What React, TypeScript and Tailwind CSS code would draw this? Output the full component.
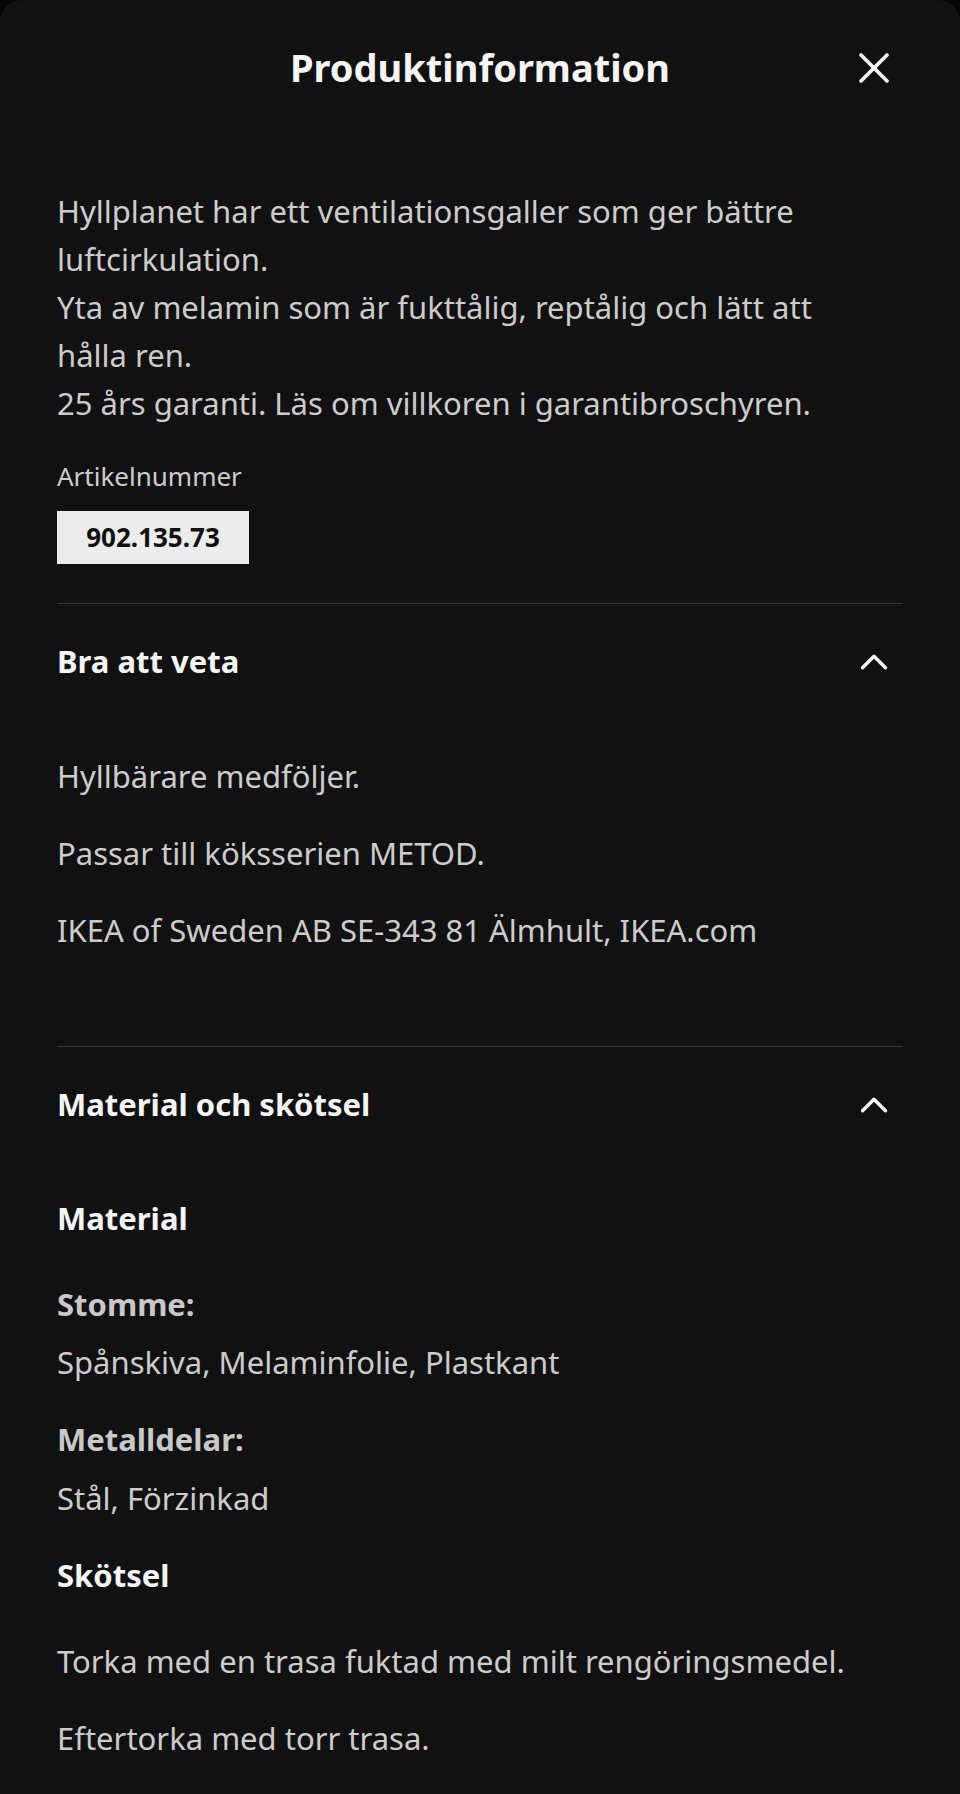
import { ChevronUp, X } from 'lucide-react';

const font = { fontFamily: '"Noto Sans", "Open Sans", sans-serif' };

function SectionHeader({ title }: { title: string }) {
  return (
    <button className="flex h-[115px] w-full items-center justify-between text-left">
      <span className="text-[31px] font-bold text-[#f5f5f5]">{title}</span>
      <ChevronUp size={46} strokeWidth={1.8} className="mr-[6px] text-[#f5f5f5]" />
    </button>
  );
}

export default function App() {
  return (
    <div className="min-h-screen bg-[#050505]" style={font}>
      <div className="min-h-[1794px] rounded-t-[22px] bg-[#111111] px-[57px] pb-10">
        {/* Header */}
        <div className="grid h-[135px] grid-cols-[1fr_auto_1fr] items-center">
          <div />
          <h1 className="text-[38px] font-bold text-[#f5f5f5]">Produktinformation</h1>
          <button aria-label="Stäng" className="mr-[3px] justify-self-end text-[#f5f5f5]">
            <X size={52} strokeWidth={1.7} />
          </button>
        </div>

        {/* Intro */}
        <div className="mt-[52px] pr-[24px] text-[31px] leading-[48px] text-[#cccccc]">
          <p>Hyllplanet har ett ventilationsgaller som ger bättre luftcirkulation.</p>
          <p>Yta av melamin som är fukttålig, reptålig och lätt att hålla ren.</p>
          <p>25 års garanti. Läs om villkoren i garantibroschyren.</p>
        </div>
        <div className="mt-[29px] text-[26px] leading-[40px] text-[#cccccc]">Artikelnummer</div>
        <div className="mt-[15px] flex h-[53px] w-[192px] items-center justify-center bg-[#ececec] text-[26px] font-bold text-[#111111]">
          902.135.73
        </div>

        {/* Bra att veta */}
        <div className="mt-[39px] border-t border-[#3a3a3a]">
          <SectionHeader title="Bra att veta" />
          <div className="flex flex-col gap-[29px] pb-[92px] pt-[33px] text-[31px] leading-[48px] text-[#cccccc]">
            <p>Hyllbärare medföljer.</p>
            <p>Passar till köksserien METOD.</p>
            <p>IKEA of Sweden AB SE-343 81 Älmhult, IKEA.com</p>
          </div>
        </div>

        {/* Material och skötsel */}
        <div className="border-t border-[#3a3a3a]">
          <SectionHeader title="Material och skötsel" />
          <div className="pt-[32px] text-[31px] leading-[48px]">
            <h3 className="font-bold text-[#f5f5f5]">Material</h3>
            <div className="mt-[38px] font-bold text-[#c8c8c8]">Stomme:</div>
            <p className="mt-[10px] text-[#cccccc]">Spånskiva, Melaminfolie, Plastkant</p>
            <div className="mt-[29px] font-bold text-[#c8c8c8]">Metalldelar:</div>
            <p className="mt-[11px] text-[#cccccc]">Stål, Förzinkad</p>
            <h3 className="mt-[29px] font-bold text-[#f5f5f5]">Skötsel</h3>
            <p className="mt-[38px] text-[#cccccc]">Torka med en trasa fuktad med milt rengöringsmedel.</p>
            <p className="mt-[29px] text-[#cccccc]">Eftertorka med torr trasa.</p>
          </div>
        </div>
      </div>
    </div>
  );
}
